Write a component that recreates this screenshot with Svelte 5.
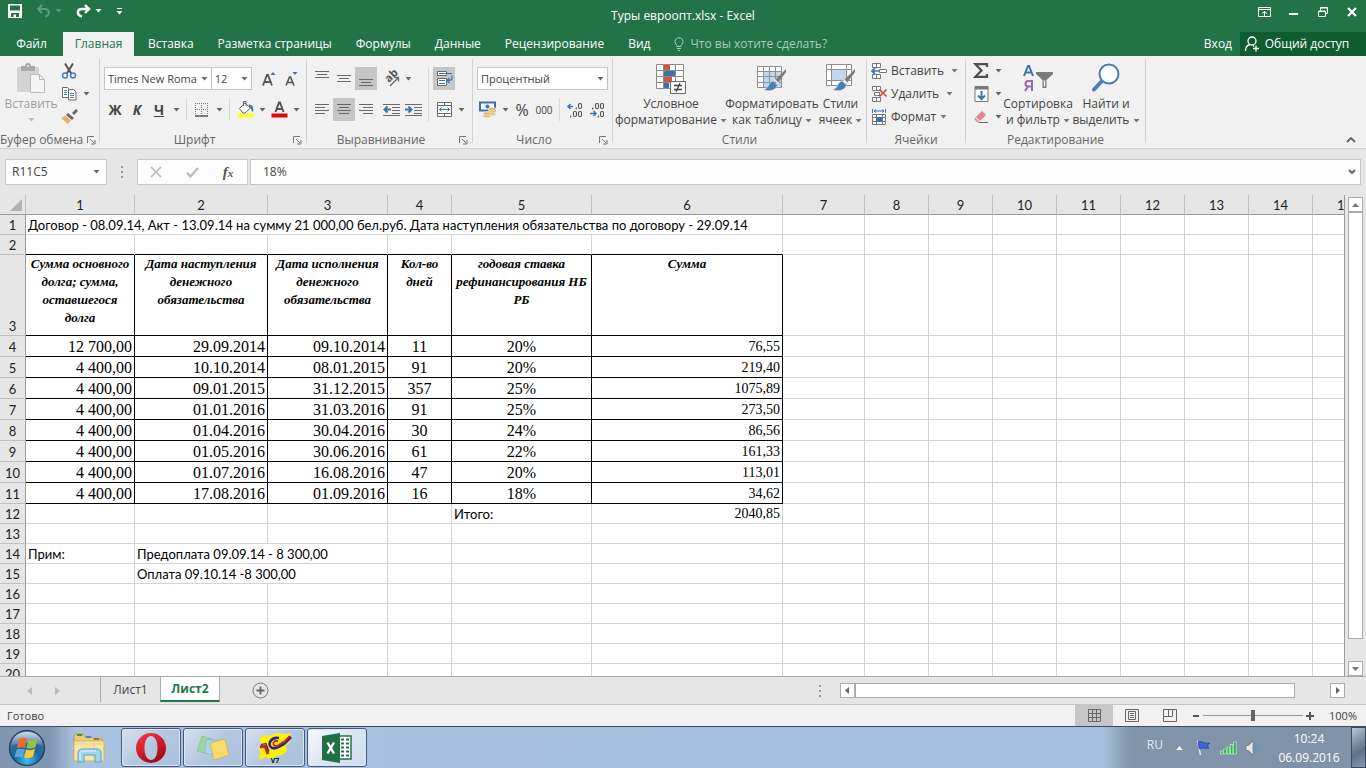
<script>
  let fontName = 'Times New Roma'
  let fontSize = '12'
  let numberFormat = 'Процентный'
  let cellRef = 'R11C5'
  let formula = '18%'
  let zoom = 100

  const tabs = ['Вставка', 'Разметка страницы', 'Формулы', 'Данные', 'Рецензирование', 'Вид']
  const columns = ['1', '2', '3', '4', '5', '6', '7', '8', '9', '10', '11', '12', '13', '14', '15']

  const heads = [
    'Сумма основного долга; сумма, оставшегося долга',
    'Дата наступления денежного обязательства',
    'Дата исполнения денежного обязательства',
    'Кол-во дней',
    'годовая ставка рефинансирования НБ РБ',
    'Сумма'
  ]

  const periods = [
    ['12 700,00', '29.09.2014', '09.10.2014', '11', '20%', '76,55'],
    ['4 400,00', '10.10.2014', '08.01.2015', '91', '20%', '219,40'],
    ['4 400,00', '09.01.2015', '31.12.2015', '357', '25%', '1075,89'],
    ['4 400,00', '01.01.2016', '31.03.2016', '91', '25%', '273,50'],
    ['4 400,00', '01.04.2016', '30.04.2016', '30', '24%', '86,56'],
    ['4 400,00', '01.05.2016', '30.06.2016', '61', '22%', '161,33'],
    ['4 400,00', '01.07.2016', '16.08.2016', '47', '20%', '113,01'],
    ['4 400,00', '17.08.2016', '01.09.2016', '16', '18%', '34,62']
  ]

  // lines of the alignment icons: [x, width] for each row
  const alignIcons = {
    left: [[1, 14], [1, 10], [1, 14], [1, 10]],
    center: [[1, 14], [3, 10], [1, 14], [3, 10]],
    right: [[1, 14], [5, 10], [1, 14], [5, 10]]
  }
</script>

{#snippet caret()}
  <svg class="caret" width="7" height="4" viewBox="0 0 7 4"><path d="M0.5 0h6L3.5 3.5z" fill="currentColor" /></svg>
{/snippet}

{#snippet drop(label)}
  <button class="drop" aria-label={label}>{@render caret()}</button>
{/snippet}

{#snippet launcher(label)}
  <button class="launcher" aria-label={label}>
    <svg width="9" height="9" viewBox="0 0 9 9" fill="none" stroke="#777"><path d="M0.5 7V0.5H7M3 3l4 4M8 4v4H4" /></svg>
  </button>
{/snippet}

{#snippet align(name)}
  <svg width="16" height="16" viewBox="0 0 16 16" fill="#6a6a6a">
    {#each alignIcons[name] as [x, w], i}
      <rect {x} y={2 + i * 3} width={w} height="1" />
    {/each}
  </svg>
{/snippet}

{#snippet valign(y)}
  <svg width="16" height="20" viewBox="0 0 16 20" fill="#6a6a6a">
    <rect x="1" {y} width="14" height="1" /><rect x="3" y={y + 3} width="10" height="1" /><rect x="1" y={y + 6} width="14" height="1" />
  </svg>
{/snippet}

{#snippet indent(out)}
  <svg width="17" height="16" viewBox="0 0 17 16" fill="#6a6a6a">
    <rect x="0" y="2" width="17" height="1" /><rect x="9" y="5" width="8" height="1" /><rect x="9" y="8" width="8" height="1" /><rect x="9" y="11" width="8" height="1" /><rect x="0" y="13" width="17" height="1" />
    {#if out}
      <path d="M8 7.5H2M4.5 4.5l-3 3 3 3" fill="none" stroke="#3b73af" stroke-width="2" />
    {:else}
      <path d="M0 7.5h6M3.5 4.5l3 3-3 3" fill="none" stroke="#3b73af" stroke-width="2" />
    {/if}
  </svg>
{/snippet}

{#snippet brush()}
  <path d="M30 7l-11 11 3 3 8-11z" fill="#7a7a7a" />
  <path d="M18.500 17.500l4 4" stroke="#f1f1f1" stroke-width="1.500" />
  <path d="M17.500 19c-5 0-4 7-10 9 6 2 13 0 14-5z" fill="#4a7ebb" stroke="#f1f1f1" stroke-width="0.600" />
{/snippet}

{#snippet emptyCells(n)}
  {#each Array(n) as _}<td></td>{/each}
{/snippet}

<div class="window">
  <header class="titlebar">
    <div class="quick">
      <button aria-label="Сохранить">
        <svg width="14" height="14" viewBox="0 0 14 14"><path d="M0 0h14v14H0zM2 1.500v5h10v-5zM3 9v4h2.500v-2.500H8V13h3V9z" fill="#fff" fill-rule="evenodd" /></svg>
      </button>
      <button class="undo" aria-label="Отменить">
        <svg width="16" height="14" viewBox="0 0 16 14" fill="none" stroke="#5f9a78" stroke-width="2"><path d="M6 1L2 5l4 4M2 5h7c5 0 5 7 0 7.500" /></svg>
        {@render caret()}
      </button>
      <button class="redo" aria-label="Вернуть">
        <svg width="16" height="14" viewBox="0 0 16 14" fill="none" stroke="#fff" stroke-width="2.400"><path d="M9 1l4 4-4 4M13 5H6C1 5 0 11 6 12.500" /></svg>
        {@render caret()}
      </button>
      <button aria-label="Настройка панели">
        <svg width="7" height="7" viewBox="0 0 7 7" fill="#fff"><rect x="1" width="5" height="1" /><path d="M0.500 3h6l-3 3.500z" /></svg>
      </button>
    </div>
    <h1>Туры евроопт.xlsx - Excel</h1>
    <div class="controls">
      <button aria-label="Параметры ленты">
        <svg width="13" height="10" viewBox="0 0 13 10" fill="none" stroke="#fff"><path d="M0.500 0.500h12v9H0.500zM0.500 2.500h12M6.500 9V4.500M4 6.500l2.500-2 2.500 2" /></svg>
      </button>
      <button aria-label="Свернуть">
        <svg width="9" height="10" viewBox="0 0 9 10"><rect y="6" width="9" height="2" fill="#fff" /></svg>
      </button>
      <button aria-label="Восстановить">
        <svg width="10" height="10" viewBox="0 0 10 10" fill="none" stroke="#fff"><path d="M0.500 4v5.500h7V4zM0.500 4.500h7M2.500 3.500v-3h7v6H8M2.500 1h7" /></svg>
      </button>
      <button aria-label="Закрыть">
        <svg width="10" height="10" viewBox="0 0 10 10"><path d="M1 1l8 8M9 1L1 9" stroke="#fff" stroke-width="2.200" /></svg>
      </button>
    </div>
  </header>

  <nav class="tabs">
    <button class="file">Файл</button>
    <button class="active">Главная</button>
    {#each tabs as tab}
      <button>{tab}</button>
    {/each}
    <button class="tell">
      <svg width="10" height="14" viewBox="0 0 10 14" fill="none" stroke="#a9cdb8"><path d="M3 9.500C3 7.500 1 7 1 4.500 1 -0.500 9 -0.500 9 4.500 9 7 7 7.500 7 9.500zM3 11.500h4M4 13.500h2" /></svg>
      Что вы хотите сделать?
    </button>
    <button class="login">Вход</button>
    <button class="share">
      <svg width="15" height="16" viewBox="0 0 15 16" fill="none" stroke="#fff" stroke-width="1.300"><circle cx="7" cy="5" r="4" /><path d="M0.500 15c0-4 2-6 4.500-6.500M8 10h1M11 9.500v6M8 12.500h6" /></svg>
      Общий доступ
    </button>
  </nav>

  <section class="ribbon">
    <div class="group clipboard">
      <div class="body">
        <button class="big paste" disabled>
          <svg width="30" height="34" viewBox="0 0 30 34"><rect x="1" y="5" width="22" height="25" fill="#d4d2d4" /><path d="M5 4h4a3 3 0 0 1 6 0h4v5H5z" fill="#a9a9a9" /><circle cx="12" cy="4" r="1" fill="#f1f1f1" /><path d="M14.500 12.500h9l5 5v13h-14z" fill="#f5f3f5" stroke="#b9b9b9" /><path d="M23.500 12.500v5h5" fill="none" stroke="#b9b9b9" /></svg>
          <span>Вставить</span>
          {@render caret()}
        </button>
        <div class="stack">
          <button aria-label="Вырезать">
            <svg width="16" height="16" viewBox="0 0 16 16" fill="none"><path d="M4 0.500L10.500 11M12 0.500L5.500 11" stroke="#555" stroke-width="2" /><circle cx="4" cy="12.500" r="2.500" stroke="#4a7ebb" stroke-width="1.500" /><circle cx="12" cy="12.500" r="2.500" stroke="#4a7ebb" stroke-width="1.500" /></svg>
          </button>
          <div class="row">
            <button aria-label="Копировать">
              <svg width="16" height="15" viewBox="0 0 16 15" fill="#fff" stroke="#6a6a6a"><path d="M1.500 1.500h5l2 2v8h-7z" /><path d="M7.500 3.500h5l2.500 2.500v8H7.500z" /><path d="M3 4.500h3M3 6.500h3M3 8.500h3M9 7.500h4M9 9.500h4M9 11.500h4" stroke="#4a7ebb" /></svg>
            </button>
            {@render drop('Варианты копирования')}
          </div>
          <button aria-label="Формат по образцу">
            <svg width="17" height="15" viewBox="0 0 17 15"><path d="M11 4l4-4 2 2-4 4z" fill="#666" /><path d="M7 4l6 5-2 2-6-5z" fill="#666" /><path d="M4.500 6.500l5.500 5-3 3.500-7-6z" fill="#e8b46a" /></svg>
          </button>
        </div>
      </div>
      <footer><span>Буфер обмена</span>{@render launcher('Буфер обмена')}</footer>
    </div>
    <div class="divider"></div>

    <div class="group font">
      <div class="body rows">
        <div class="row">
          <label class="combo family">
            <select bind:value={fontName} aria-label="Шрифт"><option>Times New Roma</option><option>Calibri</option></select>
            {@render caret()}
          </label>
          <label class="combo size">
            <select bind:value={fontSize} aria-label="Размер шрифта"><option>11</option><option>12</option></select>
            {@render caret()}
          </label>
          <button class="tool grow" aria-label="Увеличить размер">
            <svg width="16" height="16" viewBox="0 0 16 16"><path d="M2 14.500L6 4h1l4 10.500M3.500 11h6" fill="none" stroke="#555" stroke-width="1.800" /><path d="M9.500 4L12 1l2.500 3z" fill="#3b73af" /></svg>
          </button>
          <button class="tool" aria-label="Уменьшить размер">
            <svg width="16" height="16" viewBox="0 0 16 16"><path d="M3 14.500L6.500 6h1l3.500 8.500M4 11.500h6" fill="none" stroke="#555" stroke-width="1.600" /><path d="M9.500 1L12 4l2.500-3z" fill="#3b73af" /></svg>
          </button>
        </div>
        <div class="row">
          <button class="tool letter"><b>Ж</b></button>
          <button class="tool letter"><b><i>К</i></b></button>
          <button class="tool letter"><b><u>Ч</u></b></button>
          {@render drop('Подчёркивание')}
          <div class="split"></div>
          <button class="tool" aria-label="Границы">
            <svg width="14" height="14" viewBox="0 0 14 14" fill="none" stroke="#777"><path d="M0.500 0v13M6.500 0v13M12.500 0v13M0 0.500h13M0 6.500h13" stroke-dasharray="1 1" /><path d="M0 13h13" stroke="#555" stroke-width="1.500" /></svg>
          </button>
          {@render drop('Виды границ')}
          <div class="split"></div>
          <button class="tool" aria-label="Цвет заливки">
            <svg width="17" height="17" viewBox="0 0 17 17"><rect x="0.500" y="12.500" width="16" height="4" fill="#ffff21" /><path d="M2.500 7.500L8 2l5.500 5L8 12H6z" fill="#fff" stroke="#666" /><path d="M6.500 5V0.500H9V5" fill="none" stroke="#666" /><path d="M12 3.500c4 0 5 4 4 7.500-2-1-1-4-4-5z" fill="#3b73af" /></svg>
          </button>
          {@render drop('Выбор заливки')}
          <button class="tool" aria-label="Цвет текста">
            <svg width="17" height="17" viewBox="0 0 17 17"><rect x="0.500" y="12.500" width="16" height="4" fill="#dc0a0a" /><path d="M4.500 11L8 1.500h1L12.500 11M6 8h5" fill="none" stroke="#555" stroke-width="2" /></svg>
          </button>
          {@render drop('Выбор цвета')}
        </div>
      </div>
      <footer><span>Шрифт</span>{@render launcher('Шрифт')}</footer>
    </div>
    <div class="divider"></div>

    <div class="group alignment">
      <div class="body">
        <div class="rows">
          <div class="row">
            <button class="tool" aria-label="По верхнему краю">{@render valign(2)}</button>
            <button class="tool" aria-label="По середине">{@render valign(6)}</button>
            <button class="tool on" aria-label="По нижнему краю">{@render valign(10)}</button>
            <button class="tool gap" aria-label="Ориентация">
              <svg width="22" height="22" viewBox="0 0 22 22"><text transform="translate(9 15) rotate(-45)" font-size="11" font-weight="bold" fill="#555">ab</text><path d="M10 18L18 10M14.500 9.500H18.500V13.500" fill="none" stroke="#666" stroke-width="1.300" /></svg>
            </button>
            {@render drop('Варианты ориентации')}
          </div>
          <div class="row">
            <button class="tool" aria-label="По левому краю">{@render align('left')}</button>
            <button class="tool on" aria-label="По центру">{@render align('center')}</button>
            <button class="tool" aria-label="По правому краю">{@render align('right')}</button>
            <button class="tool gap" aria-label="Уменьшить отступ">{@render indent(true)}</button>
            <button class="tool" aria-label="Увеличить отступ">{@render indent(false)}</button>
          </div>
        </div>
        <div class="split tall"></div>
        <div class="rows">
          <button class="tool on" aria-label="Перенести текст">
            <svg width="17" height="17" viewBox="0 0 17 17" fill="#fff" stroke="#6a6a6a"><path d="M1.500 1.500h9v4h-9zM1.500 8.500h9v7h-9z" /><path d="M3 3.500h13M3 10.500h6M3 13.500h6" stroke="#3b73af" /><path d="M16 5.500v3c0 2-3 2-5 2M13.500 8l-2.500 2.500 2.500 2.500" fill="none" stroke="#3b73af" stroke-width="1.300" /></svg>
          </button>
          <div class="row">
            <button class="tool" aria-label="Объединить и поместить в центре">
              <svg width="15" height="15" viewBox="0 0 15 15" fill="#fff" stroke="#6a6a6a"><path d="M0.500 0.500h14v14H0.500zM0.500 3.500h14M0.500 11.500h14M7.500 0.500v3M7.500 11.500v3" /><path d="M2.500 7.500h10M4.500 5.500l-2 2 2 2M10.500 5.500l2 2-2 2" fill="none" stroke="#3b73af" /></svg>
            </button>
            {@render drop('Варианты объединения')}
          </div>
        </div>
      </div>
      <footer><span>Выравнивание</span>{@render launcher('Выравнивание')}</footer>
    </div>
    <div class="divider"></div>

    <div class="group number">
      <div class="body rows">
        <label class="combo format">
          <select bind:value={numberFormat} aria-label="Числовой формат"><option>Общий</option><option>Процентный</option></select>
          {@render caret()}
        </label>
        <div class="row">
          <button class="tool" aria-label="Финансовый формат">
            <svg width="18" height="17" viewBox="0 0 18 17"><path d="M1 1.500h15v8H1z" fill="#fff" stroke="#3b73af" stroke-width="2" /><circle cx="8.500" cy="5.500" r="2" fill="#3b73af" /><g fill="#e5ba73" stroke="#f1f1f1" stroke-width="0.600"><ellipse cx="13" cy="13" rx="4" ry="1.700" /><ellipse cx="13" cy="10.500" rx="4" ry="1.700" /><ellipse cx="13" cy="8" rx="4" ry="1.700" /><ellipse cx="8" cy="15" rx="4" ry="1.700" /><ellipse cx="8" cy="12.500" rx="4" ry="1.700" /></g></svg>
          </button>
          {@render drop('Валюта')}
          <button class="tool percent">%</button>
          <button class="tool zeros">000</button>
          <div class="split"></div>
          <button class="tool" aria-label="Увеличить разрядность">
            <svg width="16" height="16" viewBox="0 0 16 16"><path d="M6 4.500H1.500M3.500 2l-2.500 2.500 2.500 2.500" fill="none" stroke="#3b73af" stroke-width="1.500" /><g fill="none" stroke="#555" stroke-width="1.100"><rect x="11.500" y="1.500" width="3" height="5" rx="1.200" /><rect x="6.500" y="9.500" width="3" height="5" rx="1.200" /><rect x="11.500" y="9.500" width="3" height="5" rx="1.200" /><path d="M9.500 5.500l-0.500 2M4 13.500l-0.500 2" /></g></svg>
          </button>
          <button class="tool" aria-label="Уменьшить разрядность">
            <svg width="16" height="16" viewBox="0 0 16 16"><path d="M1 11.500h5.500M4.500 9l2.500 2.500L4.500 14" fill="none" stroke="#3b73af" stroke-width="1.500" /><g fill="none" stroke="#555" stroke-width="1.100"><rect x="6.500" y="1.500" width="3" height="5" rx="1.200" /><rect x="11.500" y="1.500" width="3" height="5" rx="1.200" /><rect x="11.500" y="9.500" width="3" height="5" rx="1.200" /><path d="M4 5.500l-0.500 2M9.500 13.500l-0.500 2" /></g></svg>
          </button>
        </div>
      </div>
      <footer><span>Число</span>{@render launcher('Число')}</footer>
    </div>
    <div class="divider"></div>

    <div class="group styles">
      <div class="body">
        <button class="big conditional">
          <svg width="32" height="34" viewBox="0 0 32 34"><path d="M1.500 2.500h27v24h-27z" fill="#fff" /><path d="M9 3h6v5H9zM9 15h8v5H9z" fill="#d0573c" /><path d="M9 8h11v6H9zM9 20h5v6H9z" fill="#3b73af" /><path d="M1.500 2.500h27v24h-27zM8.500 2.500v24M20.500 2.500v24M1.500 8.500h27M1.500 14.500h27M1.500 20.500h27" fill="none" stroke="#8a8a8a" /><path d="M15.500 19.500h15v12h-15z" fill="#fff" stroke="#666" /><path d="M19 23.500h8M19 27.500h8M25 21l-4 9" stroke="#444" stroke-width="1.300" /></svg>
          <span>Условное<br />форматирование {@render caret()}</span>
        </button>
        <button class="big astable">
          <svg width="32" height="34" viewBox="0 0 32 34"><path d="M1.500 4.500h24v21h-24z" fill="#fff" /><path d="M7 10h18v15H7z" fill="#c3d7ec" /><path d="M1.500 4.500h24v21h-24zM7.500 4.500v21M13.500 4.500v21M19.500 4.500v21M1.500 9.500h24M1.500 14.500h24M1.500 20.500h24" fill="none" stroke="#8f8f8f" />{@render brush()}</svg>
          <span>Форматировать<br />как таблицу {@render caret()}</span>
        </button>
        <button class="big cellstyle">
          <svg width="32" height="34" viewBox="0 0 32 34"><path d="M1.500 2.500h25v21h-25z" fill="#fff" /><path d="M7 8h14v10H7z" fill="#c3d7ec" /><path d="M1.500 2.500h25v21h-25zM6.500 2.500v21M21.500 2.500v21M1.500 7.500h25M1.500 18.500h25" fill="none" stroke="#8f8f8f" />{@render brush()}</svg>
          <span>Стили<br />ячеек {@render caret()}</span>
        </button>
      </div>
      <footer><span>Стили</span></footer>
    </div>
    <div class="divider"></div>

    <div class="group cells">
      <div class="body stack">
        <button class="line">
          <svg width="16" height="16" viewBox="0 0 16 16" fill="#fff" stroke="#777"><path d="M1.500 0.500h8v4h-8zM5.500 0.500v4M1.500 11.500h8v4h-8zM5.500 11.500v4M8.500 6.500h7v3h-7z" /><path d="M8 8H1.500M4 5L1 8l3 3" fill="none" stroke="#3b73af" stroke-width="1.600" /></svg>
          <span>Вставить</span>
          {@render caret()}
        </button>
        <button class="line">
          <svg width="16" height="16" viewBox="0 0 16 16" fill="#fff" stroke="#777"><path d="M1.500 0.500h8v4h-8zM5.500 0.500v4M1.500 11.500h8v4h-8zM5.500 11.500v4M3.500 6.500h5v3h-5z" /><path d="M8.500 3.500l7 7M15.500 3.500l-7 7" stroke="#d8502f" stroke-width="1.700" /></svg>
          <span>Удалить</span>
          {@render caret()}
        </button>
        <button class="line format-line">
          <svg width="16" height="16" viewBox="0 0 16 16" fill="#fff" stroke="#777"><path d="M1.500 5.500h13v10h-13zM5.500 5.500v10M11.500 5.500v10M1.500 8.500h13M1.500 12.500h13" /><rect x="5" y="8" width="6" height="5" fill="#3b73af" stroke="none" /><path d="M1.500 0v4M14.500 0v4M3 2h10M5 0.500L3 2l2 1.500M11 0.500L13 2l-2 1.500" fill="none" stroke="#3b73af" /></svg>
          <span>Формат</span>
          {@render caret()}
        </button>
      </div>
      <footer><span>Ячейки</span></footer>
    </div>
    <div class="divider"></div>

    <div class="group editing">
      <div class="body">
        <div class="stack">
          <div class="row">
            <button class="tool" aria-label="Сумма">
              <svg width="16" height="15" viewBox="0 0 16 15"><path d="M14 4V1.200H2.500L8.500 7.500 2.500 13.800H14V11" fill="none" stroke="#505050" stroke-width="2.200" /></svg>
            </button>
            {@render drop('Автосумма')}
          </div>
          <div class="row">
            <button class="tool" aria-label="Заполнить">
              <svg width="15" height="16" viewBox="0 0 15 16"><path d="M1 0.500h13v15H1z" fill="#fff" stroke="#777" /><rect x="1" y="0.500" width="13" height="3" fill="#777" /><path d="M7.500 5v8M4 9.500l3.500 3.500L11 9.500" fill="none" stroke="#3b73af" stroke-width="2" /></svg>
            </button>
            {@render drop('Варианты заполнения')}
          </div>
          <div class="row">
            <button class="tool" aria-label="Очистить">
              <svg width="16" height="14" viewBox="0 0 16 14"><path d="M9 1l4 4-6 6-4-4z" fill="#e28497" /><path d="M2.300 7.700l4 4L5 13 1 9z" fill="#e28497" /><path d="M6 12.500h9" stroke="#666" /></svg>
            </button>
            {@render drop('Варианты очистки')}
          </div>
        </div>
        <button class="big sort">
          <svg width="32" height="34" viewBox="0 0 32 34"><path d="M2 14L6 4h1l4 10M3.500 10.500h6" fill="none" stroke="#3b73af" stroke-width="2" /><path d="M10 29V19H6.500c-4 0-4 5.500 0 5.500H10M6 24.500L3 29" fill="none" stroke="#9668b4" stroke-width="2" /><path d="M14 10h17v2l-6.500 6v8h-4v-8L14 12z" fill="#7a7a7a" /><path d="M21.800 18.500v6h1.400v-6z" fill="#f1f1f1" /></svg>
          <span>Сортировка<br />и фильтр {@render caret()}</span>
        </button>
        <button class="big find">
          <svg width="32" height="34" viewBox="0 0 32 34"><path d="M12 19L4 27.500" stroke="#4a7ebb" stroke-width="4" stroke-linecap="round" /><circle cx="19" cy="12" r="9.500" fill="#fff" stroke="#4a7ebb" stroke-width="2" /></svg>
          <span>Найти и<br />выделить {@render caret()}</span>
        </button>
      </div>
      <footer><span>Редактирование</span></footer>
    </div>
    <div class="divider"></div>
    <button class="collapse" aria-label="Свернуть ленту">
      <svg width="10" height="6" viewBox="0 0 10 6"><path d="M1 5l4-4 4 4" fill="none" stroke="#666" stroke-width="1.800" /></svg>
    </button>
  </section>

  <section class="formula">
    <div class="namebox">
      <input bind:value={cellRef} aria-label="Имя ячейки" />
      {@render drop('Список имён')}
    </div>
    <svg class="dots" width="3" height="14" viewBox="0 0 3 14" fill="#9a9a9a"><rect y="1" width="2" height="2" /><rect y="6" width="2" height="2" /><rect y="11" width="2" height="2" /></svg>
    <div class="entry">
      <button aria-label="Отмена"><svg width="12" height="12" viewBox="0 0 12 12"><path d="M1 1l10 10M11 1L1 11" stroke="#bdbdbd" stroke-width="1.700" /></svg></button>
      <button aria-label="Ввод"><svg width="13" height="12" viewBox="0 0 13 12"><path d="M1 6.500l3.500 4L12 2" fill="none" stroke="#bdbdbd" stroke-width="2.400" /></svg></button>
      <button class="fx" aria-label="Вставить функцию"><i>f<small>x</small></i></button>
    </div>
    <div class="value">
      <input bind:value={formula} aria-label="Строка формул" />
      <button aria-label="Развернуть строку формул"><svg width="8" height="6" viewBox="0 0 8 6"><path d="M1 1l3 3 3-3" fill="none" stroke="#666" stroke-width="2" /></svg></button>
    </div>
  </section>

  <main class="sheet">
    <div class="viewport">
      <table>
        <colgroup>
          <col class="c0" /><col class="c1" /><col class="c2" /><col class="c3" /><col class="c4" /><col class="c5" /><col class="c6" /><col class="c7" />
          {#each Array(8) as _}<col class="cn" />{/each}
        </colgroup>
        <thead>
          <tr>
            <th class="corner"><svg width="12" height="12" viewBox="0 0 12 12"><path d="M12 0v12H0z" fill="#b2b2b2" /></svg></th>
            {#each columns as c}<th>{c}</th>{/each}
          </tr>
        </thead>
        <tbody>
          <tr>
            <th>1</th>
            <td colspan="6">Договор - 08.09.14, Акт - 13.09.14 на сумму 21 000,00 бел.руб. Дата наступления обязательства по договору - 29.09.14</td>
            {@render emptyCells(9)}
          </tr>
          <tr class="above">
            <th>2</th>
            {@render emptyCells(15)}
          </tr>
          <tr class="heads">
            <th>3</th>
            {#each heads as h}<td class="box">{h}</td>{/each}
            {@render emptyCells(9)}
          </tr>
          {#each periods as p, i}
            <tr class="period">
              <th>{i + 4}</th>
              {#each p as v, k}
                <td class="box" class:mid={k === 3 || k === 4} class:sum={k === 5}>{v}</td>
              {/each}
              {@render emptyCells(9)}
            </tr>
          {/each}
          <tr>
            <th>12</th>
            {@render emptyCells(4)}
            <td>Итого:</td>
            <td class="sum">2040,85</td>
            {@render emptyCells(9)}
          </tr>
          <tr><th>13</th>{@render emptyCells(15)}</tr>
          <tr>
            <th>14</th>
            <td>Прим:</td>
            <td colspan="2">Предоплата 09.09.14 - 8 300,00</td>
            {@render emptyCells(12)}
          </tr>
          <tr>
            <th>15</th>
            <td></td>
            <td colspan="2">Оплата 09.10.14 -8 300,00</td>
            {@render emptyCells(12)}
          </tr>
          {#each [16, 17, 18, 19, 20] as n}
            <tr><th>{n}</th>{@render emptyCells(15)}</tr>
          {/each}
        </tbody>
      </table>
    </div>
    <div class="vscroll">
      <button aria-label="Вверх"><svg width="7" height="4" viewBox="0 0 7 4"><path d="M0 4h7L3.500 0z" fill="#777" /></svg></button>
      <div class="thumb"></div>
      <button aria-label="Вниз"><svg width="7" height="4" viewBox="0 0 7 4"><path d="M0 0h7L3.500 4z" fill="#777" /></svg></button>
    </div>
  </main>

  <section class="sheets">
    <button class="nav" aria-label="Предыдущий лист"><svg width="5" height="8" viewBox="0 0 5 8"><path d="M5 0v8L0 4z" fill="#bcbcbc" /></svg></button>
    <button class="nav" aria-label="Следующий лист"><svg width="5" height="8" viewBox="0 0 5 8"><path d="M0 0v8l5-4z" fill="#bcbcbc" /></svg></button>
    <button class="sheet-tab first">Лист1</button>
    <button class="sheet-tab current">Лист2</button>
    <button class="add" aria-label="Новый лист"><svg width="17" height="17" viewBox="0 0 17 17" fill="none" stroke="#777"><circle cx="8.500" cy="8.500" r="7.500" /><path d="M8.500 4.500v8M4.500 8.500h8" stroke="#666" stroke-width="1.800" /></svg></button>
    <svg class="dots" width="3" height="14" viewBox="0 0 3 14" fill="#9a9a9a"><rect y="1" width="2" height="2" /><rect y="6" width="2" height="2" /><rect y="11" width="2" height="2" /></svg>
    <div class="hscroll">
      <button aria-label="Влево"><svg width="4" height="7" viewBox="0 0 4 7"><path d="M4 0v7L0 3.500z" fill="#666" /></svg></button>
      <div class="thumb"></div>
      <button aria-label="Вправо"><svg width="4" height="7" viewBox="0 0 4 7"><path d="M0 0v7l4-3.500z" fill="#666" /></svg></button>
    </div>
  </section>

  <footer class="status">
    <span class="ready">Готово</span>
    <button class="view on" aria-label="Обычный"><svg width="13" height="13" viewBox="0 0 13 13" fill="none" stroke="#666"><path d="M0.500 0.500h12v12H0.500zM4.500 0v13M8.500 0v13M0 4.500h13M0 8.500h13" /></svg></button>
    <button class="view" aria-label="Разметка страницы"><svg width="14" height="13" viewBox="0 0 14 13" fill="none" stroke="#666"><path d="M0.500 0.500h13v12H0.500zM3.500 2.500h7v8h-7zM5 4.500h4M5 6.500h4M5 8.500h4" /></svg></button>
    <button class="view" aria-label="Страничный режим"><svg width="14" height="13" viewBox="0 0 14 13" fill="none" stroke="#666"><path d="M0.500 0.500h13v12H0.500zM5.500 0v7M9.500 0v7M0 7.500h9.500" /></svg></button>
    <button class="zoom-btn" aria-label="Уменьшить"><svg width="7" height="8" viewBox="0 0 7 8"><rect y="3" width="6" height="2" fill="#555" /></svg></button>
    <input type="range" min="10" max="190" bind:value={zoom} aria-label="Масштаб" />
    <button class="zoom-btn" aria-label="Увеличить"><svg width="8" height="8" viewBox="0 0 8 8"><path d="M0 4h8M4 0v8" stroke="#555" stroke-width="2" /></svg></button>
    <span class="percent-label">{zoom}%</span>
  </footer>

  <footer class="taskbar">
    <button class="start" aria-label="Пуск">
      <svg width="38" height="38" viewBox="0 0 38 38">
        <defs>
          <radialGradient id="orb" cx="50%" cy="85%" r="80%"><stop offset="0" stop-color="#3fc4ee" /><stop offset="0.450" stop-color="#1d659c" /><stop offset="1" stop-color="#4b6c92" /></radialGradient>
          <linearGradient id="gloss" x1="0" y1="0" x2="0" y2="1"><stop offset="0" stop-color="#fff" stop-opacity="0.750" /><stop offset="1" stop-color="#fff" stop-opacity="0.100" /></linearGradient>
        </defs>
        <circle cx="19" cy="19" r="17.500" fill="url(#orb)" stroke="#173e63" stroke-width="1.200" />
        <path d="M3 17C4 -2 34 -2 35 17c-8-4-24-4-32 0z" fill="url(#gloss)" />
        <path d="M11 10c3-2 6-1 8 0l-2 9c-3-1-5-1-8 0z" fill="#ee6a35" />
        <path d="M20.500 11c3 1 6 1 9-1l-2 8c-3 2-6 2-9 1z" fill="#8fc445" />
        <path d="M8.500 20.500c3-1 5-1 8 0l-2 8c-3-1-5-1-8 0z" fill="#5aa5dc" />
        <path d="M18 20.500c3 1 6 1 9-1l-2 8c-3 2-6 2-9 1z" fill="#fbc83a" />
      </svg>
    </button>
    <button class="pinned" aria-label="Проводник">
      <svg width="34" height="32" viewBox="0 0 34 32">
        <path d="M2 4l1-2h8l2 3h7l2 2h8l1 3v18H2z" fill="#e8cd7c" stroke="#b99b4c" />
        <rect x="5" y="2" width="5" height="2" fill="#3b9a45" /><rect x="14" y="4" width="5" height="2" fill="#4a8ad0" /><rect x="22" y="6" width="5" height="2" fill="#cf5745" />
        <path d="M2 9h30v20H2z" fill="#f6e6a3" stroke="#d0b562" /><path d="M2 12h30M22 9v20" stroke="#e5cf82" />
        <path d="M6 30v-9c0-3 2-4 4-4h15c2 0 4 1 4 4v9h-6v-7H12v7z" fill="#9fd3ee" stroke="#5aa3cc" />
        <path d="M8 28v-7c0-1 1-2 2-2h14" fill="none" stroke="#e9f7ff" />
      </svg>
    </button>
    <button class="task" aria-label="Opera">
      <svg width="32" height="32" viewBox="0 0 32 32"><defs><linearGradient id="opera" x1="0" y1="0" x2="0.600" y2="1"><stop offset="0" stop-color="#ff3b45" /><stop offset="1" stop-color="#a80716" /></linearGradient></defs><path d="M16 1a15 15 0 1 0 0 30a15 15 0 1 0 0-30zM16 4c4 0 6.500 5 6.500 12S20 28 16 28 9.500 23 9.500 16 12 4 16 4z" fill="url(#opera)" fill-rule="evenodd" /></svg>
    </button>
    <button class="task" aria-label="Записки">
      <svg width="34" height="28" viewBox="0 0 34 28"><path d="M6 2l12 4-5 14L1 17z" fill="#9ad79a" stroke="#79b67e" stroke-width="0.500" /><path d="M10 6h14v16l-15-3z" fill="#a9d5f5" stroke="#7eb0da" stroke-width="0.500" /><path d="M14 9l15-4 4 16-15 5z" fill="#f8dc6a" stroke="#cfae42" stroke-width="0.700" /></svg>
    </button>
    <button class="task" aria-label="1С">
      <svg width="34" height="34" viewBox="0 0 34 34"><path d="M2 6l6-2 4 1 6-3 9 1 6-1-1 9-4 4 1 5-5 4-6 1-4 3-6-2-6 3-1-4 2-3-2-4 2-4z" fill="#fff200" /><g fill="none" stroke-linejoin="round"><path d="M2 16l5-1 3 8" stroke="#d81e2c" stroke-width="3" /><path d="M3 13.500l5-1 3 8" stroke="#24249b" stroke-width="1.200" /><path d="M21 7c-9-1-12 7-7 10 5 2 8-3 12-4l7-7" stroke="#24249b" stroke-width="2.600" /><path d="M20 10c-5-1-6 4-3 5 4 1 6-4 9-4l6-6" stroke="#d81e2c" stroke-width="1.800" /></g><text x="17" y="32" text-anchor="middle" font-size="7" font-weight="bold" fill="#111">V7</text></svg>
    </button>
    <button class="task lit" aria-label="Excel">
      <svg width="32" height="32" viewBox="0 0 32 32"><path d="M17 4h13v23H17z" fill="#fff" stroke="#217346" stroke-width="1.500" /><path d="M20 7.500h3M25 7.500h3M20 11.500h3M25 11.500h3M20 15.500h3M25 15.500h3M20 19.500h3M25 19.500h3M20 23.500h3M25 23.500h3" stroke="#217346" stroke-width="2" /><path d="M1 4l18-3v30L1 28z" fill="#1f7145" /><path d="M6.500 10.500l6.500 11M13 10.500l-6.500 11" stroke="#fff" stroke-width="2.400" /></svg>
    </button>
    <div class="tray">
      <span class="lang">RU</span>
      <svg class="up" width="9" height="6" viewBox="0 0 9 6"><path d="M4.500 0.500L8.500 5.500h-8z" fill="#fff" stroke="#5a6a80" stroke-width="0.500" /></svg>
      <svg width="16" height="16" viewBox="0 0 16 16"><path d="M1.500 1l3 14" stroke="#dbe6f5" stroke-width="1.500" /><path d="M2 2c3-2 5 2 12 1-3 2-3 3-1 5-4 1-6-1-10 1z" fill="#3f62d6" stroke="#173392" stroke-width="0.600" /></svg>
      <svg width="17" height="14" viewBox="0 0 17 14" fill="#35b353" stroke="#d3f2d9" stroke-width="0.600"><rect x="0.500" y="10" width="2.500" height="3" /><rect x="3.800" y="8" width="2.500" height="5" /><rect x="7.100" y="6" width="2.500" height="7" /><rect x="10.400" y="3.500" width="2.500" height="9.500" /><rect x="13.700" y="1" width="2.500" height="12" /></svg>
      <svg width="16" height="16" viewBox="0 0 16 16"><path d="M1 5.500h2.500L8 1v14l-4.500-4.500H1z" fill="#e6e6e6" stroke="#6b7078" stroke-width="0.700" /><path d="M10 5.500c1.500 1.500 1.500 3.500 0 5M12 3.500c2.500 2.500 2.500 6.500 0 9" fill="none" stroke="#4da0c9" stroke-width="1.200" /></svg>
      <time>10:24<br />06.09.2016</time>
      <button class="desktop" aria-label="Показать рабочий стол"></button>
    </div>
  </footer>
</div>

<style>
  :global(body) {
    margin: 0;
  }

  .window {
    display: flex;
    flex-direction: column;
    height: 100vh;
    min-height: 480px;
    overflow: hidden;
    font: 12px/16px "Open Sans", "Noto Sans", sans-serif;
    color: #444;
    background: #e6e6e6;
  }

  button, input, select {
    margin: 0;
    padding: 0;
    border: 0;
    background: none;
    font: inherit;
    color: inherit;
    outline: none;
  }

  button {
    display: flex;
    align-items: center;
    justify-content: center;
    white-space: nowrap;
    flex: none;
  }

  svg {
    flex: none;
    display: block;
  }

  .row {
    display: flex;
  }

  /* title bar */
  .titlebar {
    display: grid;
    grid-template-columns: 1fr auto 1fr;
    height: 32px;
    flex: none;
    background: #227447;
    color: #fff;
  }

  .titlebar h1 {
    margin: 0;
    align-self: center;
    font-size: 12px;
    font-weight: normal;
  }

  .quick {
    display: flex;
    align-items: center;
    gap: 14px;
    height: 22px;
    padding-left: 8px;
  }

  .quick button {
    gap: 3px;
  }

  .undo {
    color: #5f9a78;
  }

  .controls {
    display: flex;
    align-items: center;
    justify-content: flex-end;
    height: 24px;
  }

  .controls button {
    width: 29px;
  }

  /* ribbon tabs */
  .tabs {
    display: flex;
    height: 24px;
    flex: none;
    background: #227447;
    color: #fff;
  }

  .tabs button {
    padding: 0 12px;
  }

  .tabs .file {
    width: 63px;
  }

  .tabs .active {
    width: 71px;
    margin-right: 2px;
    background: #f1f1f1;
    color: #227447;
  }

  .tabs .tell {
    gap: 6px;
    color: #a9cdb8;
  }

  .tabs .login {
    margin-left: auto;
    padding: 0 8px;
  }

  .tabs .share {
    width: 126px;
    gap: 5px;
    padding: 0 12px 0 0;
    background: #0e5c2f;
  }

  /* ribbon */
  .ribbon {
    display: flex;
    height: 89px;
    flex: none;
    padding-top: 3px;
    background: #f1f1f1;
    border-bottom: 1px solid #d2d2d2;
  }

  .group {
    display: flex;
    flex-direction: column;
    flex: none;
  }

  .group .body {
    display: flex;
    flex: 1;
    padding: 0 4px;
  }

  .group footer {
    display: flex;
    align-items: center;
    height: 16px;
    color: #666;
  }

  .group footer span {
    flex: 1;
    text-align: center;
    white-space: nowrap;
  }

  .launcher {
    width: 17px;
  }

  .divider {
    width: 1px;
    height: 84px;
    flex: none;
    background: #d2d2d2;
  }

  .clipboard { width: 99px; }
  .font { width: 206px; }
  .alignment { width: 165px; }
  .number { width: 139px; }
  .styles { width: 253px; }
  .cells { width: 98px; }
  .editing { width: 179px; }

  .rows {
    display: flex;
    flex-direction: column;
    gap: 8px;
    padding-top: 8px;
  }

  .group .body.rows {
    padding-top: 8px;
  }

  .stack, .group .body.stack {
    display: flex;
    flex: none;
    flex-direction: column;
  }

  .group .body.stack {
    flex: 1;
  }

  .stack > * {
    height: 23px;
    align-items: center;
  }

  .tool {
    width: 22px;
    height: 23px;
  }

  .tool.on {
    background: #c6c6c6;
  }

  .tool.gap {
    margin-left: 3px;
  }

  .tool.grow {
    margin-left: 6px;
  }

  .drop {
    width: 12px;
    color: #666;
  }

  .split {
    width: 1px;
    margin: 0 4px;
    background: #d8d8d8;
  }

  .split.tall {
    margin-top: 8px;
    margin-bottom: 10px;
  }

  .letter {
    font-size: 14px;
  }

  .percent {
    font-size: 16px;
  }

  .zeros {
    font-size: 10px;
  }

  .combo {
    display: grid;
    align-items: center;
    height: 21px;
    border: 1px solid #c3c3c3;
    background: #fff;
    color: #666;
    font-size: 11px;
  }

  .combo select {
    grid-area: 1 / 1;
    width: 100%;
    height: 21px;
    padding: 0 10px 0 3px;
    appearance: none;
    color: #444;
  }

  .combo .caret {
    grid-area: 1 / 1;
    justify-self: end;
    margin-right: 3px;
    pointer-events: none;
  }

  .family { width: 110px; }
  .size { width: 41px; border-left: 0; }
  .format { width: 129px; }

  .big {
    flex-direction: column;
    justify-content: flex-start;
    padding-top: 3px;
  }

  .big .caret, .line .caret {
    color: #777;
  }

  .big span .caret {
    display: inline-block;
    vertical-align: middle;
  }

  .paste {
    width: 54px;
    color: #a0a0a0;
  }

  .paste .caret {
    margin-top: 6px;
    color: #bbb;
  }

  .clipboard .stack > button,
  .clipboard .stack .row button:first-child {
    width: 22px;
  }

  .conditional { width: 108px; }
  .astable { width: 94px; }
  .cellstyle { width: 43px; }
  .sort { width: 68px; }
  .find { width: 68px; }

  .line {
    justify-content: flex-start;
    gap: 4px;
  }

  .line .caret {
    margin-left: 3px;
  }

  .format-line .caret {
    margin-left: 0;
  }

  .collapse {
    width: 30px;
    height: 16px;
    margin: auto 0 0 auto;
  }

  /* formula bar */
  .formula {
    display: flex;
    align-items: flex-start;
    height: 36px;
    flex: none;
    padding: 10px 5px 0;
  }

  .namebox, .entry, .value {
    display: flex;
    box-sizing: border-box;
    height: 26px;
    border: 1px solid #c6c6c6;
    background: #fdfdfd;
  }

  .namebox { width: 102px; }
  .namebox input { width: 84px; padding-left: 6px; box-sizing: border-box; }
  .formula .dots { margin: 6px 13px 0 14px; }
  .entry { width: 111px; margin-right: 2px; }
  .entry button { width: 36px; }
  .value { flex: 1; }
  .value input { flex: 1; min-width: 0; padding-left: 12px; }
  .value button { width: 16px; }

  .fx {
    font: bold 15px/16px "Liberation Serif", serif;
    color: #555;
  }

  .fx small {
    font-size: 11px;
  }

  /* sheet */
  .sheet {
    display: flex;
    flex: 1;
    min-height: 0;
  }

  .viewport {
    flex: 1;
    min-width: 0;
    overflow: hidden;
    border-right: 1px solid #9b9b9b;
  }

  table {
    width: 1377px;
    table-layout: fixed;
    border-collapse: separate;
    border-spacing: 0;
    background: #fff;
    font-family: Lato, "Open Sans", sans-serif;
    font-size: 13px;
    color: #000;
  }

  .c0 { width: 26px; }
  .c1 { width: 109px; }
  .c2 { width: 133px; }
  .c3 { width: 120px; }
  .c4 { width: 64px; }
  .c5 { width: 140px; }
  .c6 { width: 191px; }
  .c7 { width: 82px; }
  .cn { width: 64px; }

  th, td {
    box-sizing: border-box;
    height: 20px;
    padding: 0 2px;
    line-height: 18px;
    border-right: 1px solid #d4d4d4;
    border-bottom: 1px solid #d4d4d4;
    overflow: hidden;
    vertical-align: bottom;
  }

  td {
    white-space: nowrap;
  }

  th {
    background: #e6e6e6;
    font-weight: normal;
    color: #222;
    border-color: #c0c0c0;
  }

  thead th {
    border-bottom-color: #9b9b9b;
  }

  tbody th {
    border-right-color: #9b9b9b;
  }

  .corner svg {
    margin: 0 0 3px 8px;
  }

  .above td:nth-child(-n + 7) {
    border-bottom-color: #000;
  }

  .box {
    border-color: #000;
  }

  .heads td {
    height: 81px;
    padding: 0;
    vertical-align: top;
    text-align: center;
    white-space: normal;
    font: italic bold 13px/18px "Liberation Serif", serif;
  }

  .period td, .period th {
    height: 21px;
  }

  .period td {
    text-align: right;
    font: 16px/18px "Liberation Serif", serif;
  }

  .period td.mid {
    text-align: center;
  }

  tr td.sum {
    text-align: right;
    font: 14px/18px "Liberation Serif", serif;
  }

  .vscroll {
    display: flex;
    flex-direction: column;
    width: 16px;
    padding: 2px 2px 0 3px;
  }

  .vscroll button, .hscroll button {
    box-sizing: border-box;
    width: 15px;
    height: 15px;
    border: 1px solid #ababab;
    background: #fff;
  }

  .vscroll .thumb {
    flex: 1;
    box-sizing: border-box;
    width: 15px;
    margin-bottom: 22px;
    border: 1px solid #ababab;
    background: #fff;
  }

  /* sheet tabs */
  .sheets {
    display: flex;
    align-items: center;
    height: 27px;
    flex: none;
    border-top: 1px solid #ababab;
    font-size: 12px;
  }

  .nav { width: 28px; }
  .nav:first-child { margin-left: 15px; }

  .sheet-tab {
    height: 25px;
    align-self: flex-start;
    width: 60px;
  }

  .first {
    margin-left: 29px;
    border-left: 1px solid #ababab;
  }

  .current {
    box-sizing: border-box;
    background: #fff;
    border: 1px solid #ababab;
    border-top: 0;
    border-bottom: 2px solid #227447;
    color: #227447;
    font-weight: bold;
  }

  .add { margin-left: 32px; }
  .sheets .dots { margin-left: auto; margin-right: 18px; }

  .hscroll {
    display: flex;
    width: 37%;
    padding-right: 21px;
  }

  .hscroll .thumb {
    flex: 1;
    box-sizing: border-box;
    height: 15px;
    margin-right: 35px;
    border: 1px solid #ababab;
    background: #fff;
  }

  /* status bar */
  .status {
    display: flex;
    align-items: center;
    height: 21px;
    flex: none;
    border-top: 1px solid #c6c6c6;
    background: #f1f1f1;
    font-size: 11px;
  }

  .ready {
    margin-right: auto;
    padding-left: 7px;
  }

  .view {
    width: 38px;
    height: 21px;
  }

  .view.on { background: #c6c6c6; }
  .zoom-btn { width: 14px; }

  .status input {
    width: 100px;
    height: 12px;
    appearance: none;
    background: linear-gradient(#999, #999) center / 100% 1px no-repeat;
  }

  .status input::-webkit-slider-thumb {
    appearance: none;
    width: 4px;
    height: 11px;
    background: #666;
  }

  .percent-label {
    padding: 0 9px 0 12px;
  }

  /* taskbar */
  .taskbar {
    display: flex;
    height: 41px;
    flex: none;
    border-top: 1px solid #3c4d69;
    background: linear-gradient(90deg, #8295b0, #8295b0 50px, #a8c2df 75px, #a4bfde calc(100% - 262px), #8194aa calc(100% - 236px), #7f92a8);
  }

  .start { width: 54px; }
  .pinned { width: 67px; padding-left: 2px; }

  .task {
    box-sizing: border-box;
    width: 60px;
    height: 39px;
    margin: 1px 2px 0 0;
    border: 1px solid #45587a;
    border-radius: 3px;
    background: linear-gradient(135deg, #d6e1f0, #b4c7e0 50%, #a9bfdb);
    box-shadow: inset 0 0 0 1px #dce7f5;
  }

  .task.lit {
    background: linear-gradient(135deg, #f7fafd, #dbe6f3 50%, #cfdcee);
  }

  .tray {
    display: flex;
    align-items: center;
    gap: 8px;
    margin-left: auto;
    color: #fff;
  }

  .lang {
    color: #e3eaf3;
    margin-right: 4px;
    padding-bottom: 5px;
  }

  .up { margin-right: 4px; }

  time {
    width: 68px;
    padding: 0 0 0 6px;
    text-align: center;
    line-height: 19px;
  }

  .desktop {
    align-self: stretch;
    box-sizing: border-box;
    width: 15px;
    border: 1px solid #39485e;
    background: linear-gradient(150deg, #b9c4d1, #5d7088 60%, #8798ac);
  }
</style>
